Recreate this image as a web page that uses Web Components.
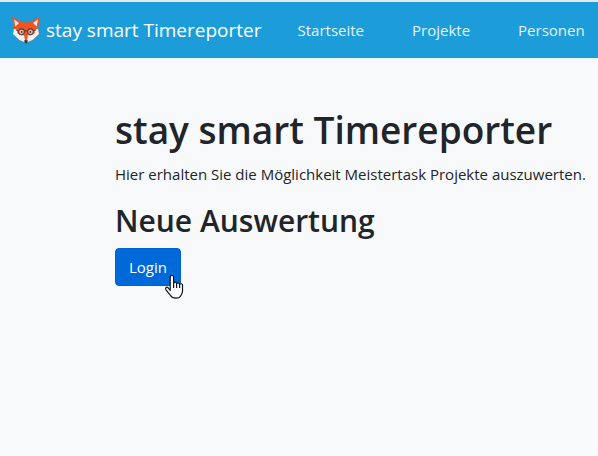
<!DOCTYPE html>
<html lang="de">
<head>
<meta charset="utf-8">
<meta name="viewport" content="width=device-width, initial-scale=1">
<title>stay smart Timereporter</title>
<style>
  body {
    margin: 0;
    background: #f8f9fb;
    color: #212529;
    font: 400 15px/24px "Open Sans", "Noto Sans", sans-serif;
  }
</style>
</head>
<body>
<time-reporter></time-reporter>

<template id="fox-logo">
  <style>
    :host { display: block; flex: none; width: 28px; height: 28px; }
    svg { display: block; width: 100%; height: 100%; }
  </style>
  <svg viewBox="0 0 28 28" aria-hidden="true">
    <path d="M0 .5 10 6.200h8L28 .5 26 13l1 5-6.500 6L14 27 7.500 24 1 18l1-5z" fill="#ee5320"/>
    <path d="M2.200 3.500 7 7 3.200 10.500zM25.800 3.500 21 7l3.800 3.500z" fill="#f6eeee"/>
    <path d="M2 13c4 0 9 1.500 10.500 7l1 6.500L7.500 24 1 18zM26 13c-4 0-9 1.500-10.500 7l-1 6.500L20.500 24 27 18z" fill="#f4f3f3"/>
    <path d="M5 12.500 12 14l1 5-3.500.5L5 17zM23 12.500 16 14l-1 5 3.500.5L23 17z" fill="#ee7850"/>
    <path d="M12 13h4l-.7 10h-2.600z" fill="#ee5320"/>
    <g fill="#f3b49c" stroke="#553b38" stroke-width="1.100">
      <circle cx="9.500" cy="15.800" r="2.900"/>
      <circle cx="18.500" cy="15.800" r="2.900"/>
      <path d="M12.300 15.200q1.700-1 3.400 0M6.600 14.500l-2.600-.6M21.400 14.500l2.600-.6" fill="none"/>
    </g>
    <circle cx="9.700" cy="15.900" r=".9" fill="#402d32"/>
    <circle cx="18.300" cy="15.900" r=".9" fill="#402d32"/>
    <path d="M12 24.500q2-1 4 0L15 27l-1 .6-1-.6z" fill="#37343a"/>
  </svg>
</template>

<template id="nav-item">
  <style>
    :host { display: block; }
    a { display: block; padding: 8px 24px; color: #e4f3fb; text-decoration: none; white-space: nowrap; }
  </style>
  <a href="#"><slot></slot></a>
</template>

<template id="app-navbar">
  <style>
    :host { display: block; border-top: 2px solid #e6eaec; background: #1c9dda; }
    nav { display: flex; align-items: center; min-height: 56px; padding: 0 12px; box-sizing: border-box; }
    .brand { display: flex; align-items: center; gap: 6px; margin-right: 12px; color: #fff; font-size: 19px; line-height: 30px; text-decoration: none; white-space: nowrap; }
    .links { display: flex; }
  </style>
  <nav>
    <a class="brand" href="#"><fox-logo></fox-logo><span><slot name="brand"></slot></span></a>
    <div class="links"><slot></slot></div>
  </nav>
</template>

<template id="login-button">
  <style>
    :host { display: inline-block; position: relative; }
    button { display: block; padding: 6px 13px; border: 1px solid #0062cc; border-radius: 4px; background: #0069d9; color: #fff; font: inherit; cursor: pointer; }
    svg { position: absolute; right: -3px; bottom: -14px; width: 20px; height: 26px; pointer-events: none; }
  </style>
  <button type="button"><slot></slot></button>
  <svg viewBox="0 0 20 26" aria-hidden="true">
    <path d="M6.200 16.500V3a1.700 1.700 0 0 1 3.400 0v6.500a1.500 1.500 0 0 1 3 .5 1.500 1.500 0 0 1 3 .8 1.500 1.500 0 0 1 2.900.9v5.300c0 3-1.500 4-2 5.300-1 1.400-2 1.900-4.500 1.900-3.300 0-4.500-1-5.700-3L2 15.800c-1.400-2.300.8-3.500 2.300-1.800z" fill="#fff" stroke="#111319" stroke-width="1.200" stroke-linejoin="round"/>
    <path d="M9.600 9v5M12.600 10v4M15.600 11v3" fill="none" stroke="#111319" stroke-width="1.200"/>
  </svg>
</template>

<template id="time-reporter">
  <style>
    :host { display: block; }
    main { padding: 48px 8px 48px 115px; }
    h1, h2 { margin: 0 0 8px; font-weight: 600; }
    h1 { font-size: 37px; line-height: 48px; }
    h2 { font-size: 30px; line-height: 38px; }
    p { margin: 0 0 16px; white-space: nowrap; }
  </style>
  <app-navbar>
    <span slot="brand">stay smart Timereporter</span>
    <nav-item>Startseite</nav-item>
    <nav-item>Projekte</nav-item>
    <nav-item>Personen</nav-item>
  </app-navbar>
  <main>
    <h1>stay smart Timereporter</h1>
    <p>Hier erhalten Sie die Möglichkeit Meistertask Projekte auszuwerten.</p>
    <h2>Neue Auswertung</h2>
    <login-button>Login</login-button>
  </main>
</template>

<script>
  class TemplateElement extends HTMLElement {
    constructor() {
      super();
      const template = document.getElementById(this.localName);
      this.attachShadow({ mode: "open" }).append(template.content.cloneNode(true));
    }
  }
  customElements.define("fox-logo", class extends TemplateElement {});
  customElements.define("nav-item", class extends TemplateElement {});
  customElements.define("app-navbar", class extends TemplateElement {});
  customElements.define("login-button", class extends TemplateElement {});
  customElements.define("time-reporter", class extends TemplateElement {});
</script>
</body>
</html>
